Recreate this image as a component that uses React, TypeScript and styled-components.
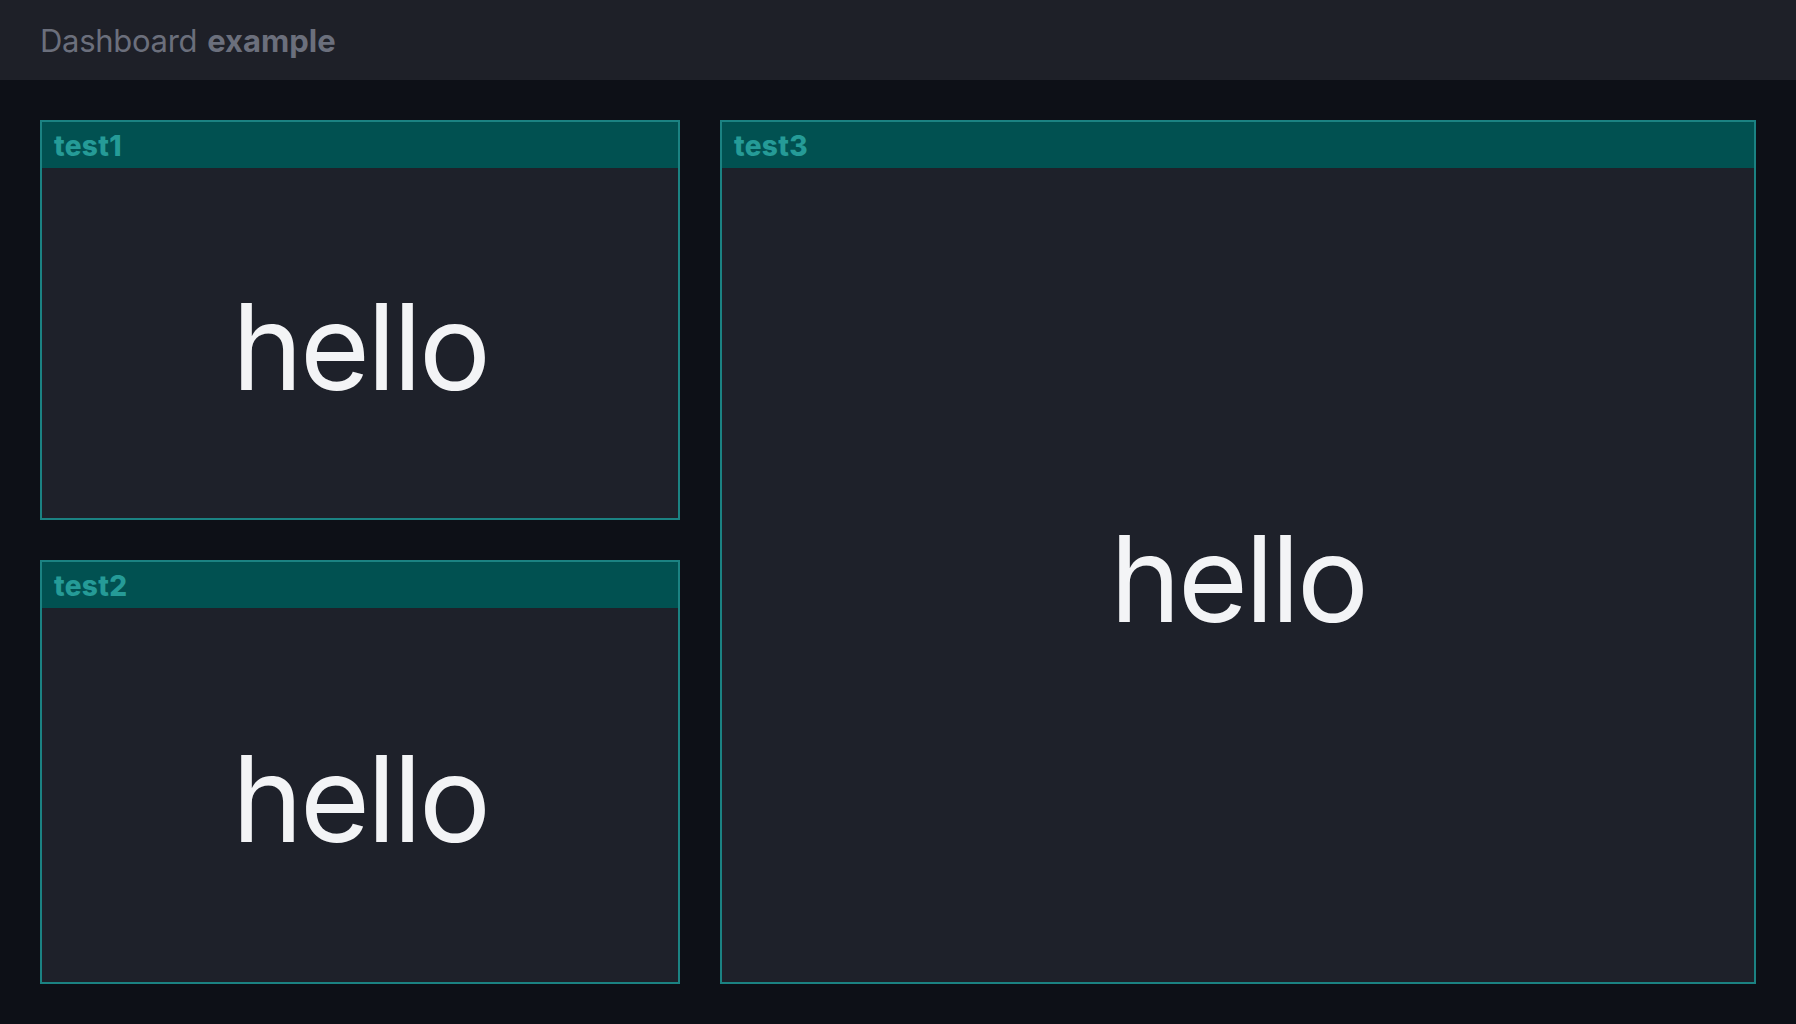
import React, { FC } from 'react';
import styled, { createGlobalStyle } from 'styled-components';

const GlobalStyle = createGlobalStyle`
  html, body {
    margin: 0;
    padding: 0;
    background-color: #0d1017;
    font-family: Inter, "Noto Sans", Arial, sans-serif;
  }
  * {
    box-sizing: border-box;
  }
`;

const Page = styled.div`
  display: flex;
  flex-direction: column;
  width: 100%;
  height: 1024px;
  background-color: #0d1017;
`;

const TopBar = styled.header`
  display: flex;
  align-items: center;
  height: 80px;
  padding: 0 40px;
  background-color: #1e2028;
  color: #6b6f7c;
  font-size: 31px;
  font-weight: 400;
  letter-spacing: -0.3px;
`;

const Strong = styled.strong`
  font-weight: 700;
  margin-left: 10px;
  letter-spacing: 0;
`;

const Grid = styled.main`
  flex: 1;
  display: grid;
  grid-template-columns: 640px 1fr;
  grid-template-rows: 400px 1fr;
  gap: 40px;
  padding: 40px;
`;

const Panel = styled.section<{ tall?: boolean }>`
  display: flex;
  flex-direction: column;
  border: 2px solid #1b8282;
  background-color: #1e212a;
  grid-row: ${({ tall }) => (tall ? '1 / 3' : 'auto')};
  grid-column: ${({ tall }) => (tall ? '2' : '1')};
`;

const PanelHeader = styled.div`
  display: flex;
  align-items: center;
  height: 46px;
  padding: 2px 12px 0;
  background-color: #015151;
  color: #259b97;
  font-size: 28px;
  font-weight: 800;
  letter-spacing: 0.3px;
`;

const PanelBody = styled.div`
  flex: 1;
  display: flex;
  align-items: center;
  justify-content: center;
  padding-top: 6px;
  color: #f3f4f6;
  font-size: 120px;
  font-weight: 400;
  letter-spacing: -3px;
`;

interface WidgetProps {
  title: string;
  tall?: boolean;
}

const Widget: FC<WidgetProps> = ({ title, tall }) => (
  <Panel tall={tall}>
    <PanelHeader>{title}</PanelHeader>
    <PanelBody>hello</PanelBody>
  </Panel>
);

const App: FC = () => (
  <Page>
    <GlobalStyle />
    <TopBar>
      Dashboard<Strong>example</Strong>
    </TopBar>
    <Grid>
      <Widget title="test1" />
      <Widget title="test3" tall />
      <Widget title="test2" />
    </Grid>
  </Page>
);

export default App;
